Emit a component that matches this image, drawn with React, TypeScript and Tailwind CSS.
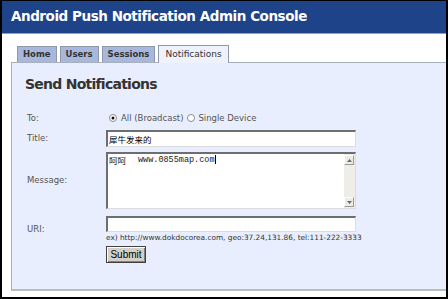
import React from 'react'

const sans = { fontFamily: '"DejaVu Sans", Verdana, sans-serif' }

function Radio({ checked }: { checked?: boolean }) {
  return (
    <svg width="8" height="8" viewBox="0 0 8 8" className="shrink-0">
      <circle cx="4" cy="4" r="3.5" fill="#fff" stroke="#8a8a8a" strokeWidth="1" />
      {checked && <circle cx="4" cy="4" r="1.5" fill="#111" />}
    </svg>
  )
}

function ScrollButton({ up }: { up?: boolean }) {
  return (
    <div className="w-[10px] h-[10px] bg-[#ecebe6] border border-t-[#fff] border-l-[#fff] border-r-[#9a9a9a] border-b-[#9a9a9a] flex items-center justify-center">
      <svg width="5" height="3" viewBox="0 0 5 3">
        <path d={up ? 'M0 3 L2.5 0 L5 3 Z' : 'M0 0 L2.5 3 L5 0 Z'} fill="#6a6a6a" />
      </svg>
    </div>
  )
}

const tabClass =
  'h-[16px] px-[5px] flex items-center bg-[#a8b8dc] border border-b-0 border-[#8e98aa] text-[8.5px] font-bold text-[#333]'
const inputClass =
  'w-[250px] bg-white border-t-2 border-l-2 border-r border-b border-t-[#6e6e6e] border-l-[#6e6e6e] border-r-[#dcdcdc] border-b-[#dcdcdc]'
const labelClass = 'w-[79px] shrink-0 flex items-center text-[8.5px] text-[#555]'

export default function App() {
  return (
    <div className="w-[448px] h-[299px] bg-black pt-px px-[2px] pb-[2px] overflow-hidden" style={sans}>
      <div className="h-full bg-white flex flex-col">
        <div className="h-[32px] shrink-0 bg-[#1f4388] flex items-center pl-[9px]">
          <h1 className="text-[13.5px] font-bold text-white tracking-[-0.45px] leading-none">
            Android Push Notification Admin Console
          </h1>
        </div>
        <div className="h-px shrink-0 bg-[#a0a0a0]" />

        <div className="mt-[11px] pl-[15px] flex items-end gap-[3px] relative z-10">
          <div className={tabClass}>Home</div>
          <div className={tabClass}>Users</div>
          <div className={tabClass}>Sessions</div>
          <div className="h-[18px] -mb-px px-[6px] flex items-center bg-[#eef2fd] border border-b-0 border-[#8e98aa] text-[9px] text-[#333]">
            Notifications
          </div>
        </div>

        <div className="flex-1 ml-[9px] mb-[6px] bg-[#e8eefd] border-l border-t border-[#a9b0bd] border-b-2 border-b-[#bcbcbc] pl-[15px] pt-[13px]">
          <h2 className="-ml-[2px] text-[14px] leading-[16px] font-bold text-[#333] tracking-[-0.75px]">
            Send Notifications
          </h2>

          <div className="mt-[19px] h-[14px] flex">
            <div className={labelClass}>To:</div>
            <div className="flex items-center pl-[3px] text-[8.5px] text-[#555]">
              <Radio checked />
              <span className="ml-[4px]">All (Broadcast)</span>
              <span className="ml-[4px]"><Radio /></span>
              <span className="ml-[3px]">Single Device</span>
            </div>
          </div>

          <div className="mt-[5px] h-[17px] flex">
            <div className={labelClass}>Title:</div>
            <div className={inputClass + ' h-[17px] flex items-center pl-[1px]'}>
              <span
                className="text-[8.5px] leading-none text-black"
                style={{ fontFamily: '"Noto Sans CJK SC", sans-serif' }}
              >
                犀牛发来的
              </span>
            </div>
          </div>

          <div className="mt-[5px] h-[57px] flex">
            <div className={labelClass}>Message:</div>
            <div className={inputClass + ' h-[57px] flex'}>
              <div className="flex-1 flex items-start pt-[1px] pl-px text-[8.5px] leading-[10px] text-[#222]">
                <span style={{ fontFamily: '"Noto Sans CJK SC", sans-serif' }}>呵呵</span>
                <span className="ml-[12px]" style={{ fontFamily: '"Liberation Mono", monospace' }}>
                  www.0855map.com
                </span>
                <span className="w-px h-[9px] bg-black" />
              </div>
              <div className="w-[11px] bg-[#eeede8] flex flex-col justify-between py-px">
                <ScrollButton up />
                <ScrollButton />
              </div>
            </div>
          </div>

          <div className="mt-[7px] h-[26px] flex">
            <div className={labelClass}>URI:</div>
            <div className="flex flex-col">
              <div className={inputClass + ' h-[17px]'} />
              <div className="mt-px text-[7.35px] leading-[9px] text-[#333] whitespace-nowrap">
                ex) http://www.dokdocorea.com, geo:37.24,131.86, tel:111-222-3333
              </div>
            </div>
          </div>

          <div className="mt-[4px] flex">
            <div className="w-[79px] shrink-0" />
            <button
              className="w-[40px] h-[17px] bg-[#d4d0c8] border border-[#404040] shadow-[inset_1px_1px_0_#fff,inset_-1px_-1px_0_#808080] text-[10px] text-black leading-none"
              style={{ fontFamily: '"Liberation Sans", Arial, sans-serif' }}
            >
              Submit
            </button>
          </div>
        </div>
      </div>
    </div>
  )
}
